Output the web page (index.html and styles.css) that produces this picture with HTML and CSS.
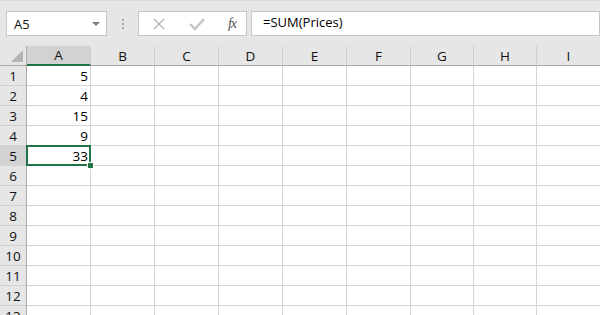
FILE: index.html
```html
<!DOCTYPE html>
<html>
<head>
  <title>Sheet</title>
  <link rel="stylesheet" href="styles.css">
</head>
<body>
  <div class="toolbar">
    <div class="namebox">
      <span>A5</span>
      <span class="caret"></span>
    </div>
    <div class="grip"><i></i><i></i><i></i></div>
    <div class="buttons">
      <svg width="16" height="16" viewBox="0 0 16 16"><path d="M3 3 L13 13 M13 3 L3 13" stroke="#b4b4b4" stroke-width="1.4" fill="none"/></svg>
      <svg width="18" height="16" viewBox="0 0 18 16"><path d="M2 8 L7 13 L16 3" stroke="#c4c4c4" stroke-width="2.4" fill="none"/></svg>
      <span class="fx">fx</span>
    </div>
    <div class="formula">=SUM(Prices)</div>
  </div>

  <div class="sheet">
    <div class="corner"><span class="tri"></span></div>
    <div class="col sel">A</div>
    <div class="col">B</div>
    <div class="col">C</div>
    <div class="col">D</div>
    <div class="col">E</div>
    <div class="col">F</div>
    <div class="col">G</div>
    <div class="col">H</div>
    <div class="col">I</div>
  </div>
  <div class="sheet" id="rows"></div>

  <script>
    const values = [5, 4, 15, 9, 33];
    const rows = document.getElementById("rows");
    for (let r = 1; r <= 13; r++) {
      const head = document.createElement("div");
      head.className = "rowhead" + (r === 5 ? " sel" : "");
      head.textContent = r;
      rows.appendChild(head);
      for (let c = 0; c < 9; c++) {
        const cell = document.createElement("div");
        cell.className = "cell";
        if (c === 0 && values[r - 1] !== undefined) cell.textContent = values[r - 1];
        if (c === 0 && r === 5) {
          cell.classList.add("active");
          const handle = document.createElement("span");
          handle.className = "handle";
          cell.appendChild(handle);
        }
        rows.appendChild(cell);
      }
    }
  </script>
</body>
</html>
```

FILE: styles.css
```css
body { margin: 0; background: #e6e6e6; font-family: "Open Sans", "Liberation Sans", sans-serif; width: 600px; height: 315px; overflow: hidden; }
.toolbar { display: flex; align-items: center; height: 25px; padding: 10px 0 10px 6px; border-top: 1px solid #d8d8d8; margin-top: 0; box-sizing: content-box; }
.namebox { width: 101px; height: 25px; box-sizing: border-box; background: white; border: 1px solid #c6c6c6; display: flex; align-items: center; justify-content: space-between; padding: 0 6px 0 7px; font-size: 13px; color: #111; }
.caret { width: 0; height: 0; border-left: 4px solid transparent; border-right: 4px solid transparent; border-top: 4px solid #7a7a7a; }
.grip { width: 31px; display: flex; flex-direction: column; align-items: center; gap: 2px; }
.grip i { width: 2px; height: 2px; background: #a8a8a8; }
.buttons { width: 109px; height: 25px; box-sizing: border-box; background: white; border: 1px solid #c6c6c6; display: flex; align-items: center; padding: 0 10px 0 12px; justify-content: space-between; }
.fx { font-family: "Liberation Serif", serif; font-style: italic; font-size: 14px; color: #555; letter-spacing: -1px; }
.formula { flex: 1; margin-left: 4px; height: 25px; box-sizing: border-box; background: white; border: 1px solid #c6c6c6; font-size: 13px; line-height: 21px; color: #000; padding-left: 11px; }

.sheet { display: grid; grid-template-columns: 27px 64px 64px 64px 64px 64px 64px 63px 63px 64px; }
#rows { grid-auto-rows: 20px; background: white; }
.corner, .col { height: 20px; box-sizing: border-box; background: #e6e6e6; border-bottom: 1px solid #ababab; }
.corner { border-right: 1px solid #ababab; position: relative; }
.tri { position: absolute; right: 3px; bottom: 3px; width: 0; height: 0; border-left: 12px solid transparent; border-bottom: 12px solid #b4b4b4; }
.col { border-right: 1px solid #d0d0d0; font-size: 13.5px; color: #111; text-align: center; line-height: 20px; }
.col.sel { background: #d2d2d2; border-bottom: 2px solid #217346; line-height: 19px; }
.rowhead { box-sizing: border-box; background: #e6e6e6; border-right: 1px solid #ababab; border-bottom: 1px solid #d0d0d0; font-size: 13.5px; color: #111; text-align: center; line-height: 20px; }
.rowhead.sel { background: #d2d2d2; }
.cell { box-sizing: border-box; border-right: 1px solid #d4d4d4; border-bottom: 1px solid #d4d4d4; font-size: 13.5px; color: #000; text-align: right; padding-right: 2px; line-height: 20px; }
.cell.active { position: relative; z-index: 1; border: 2px solid #217346; margin: -1px 0 0 -1px; line-height: 18px; padding-right: 1px; }
.handle { position: absolute; right: -5px; bottom: -5px; width: 5px; height: 5px; background: #217346; border: 1px solid white; }
```
